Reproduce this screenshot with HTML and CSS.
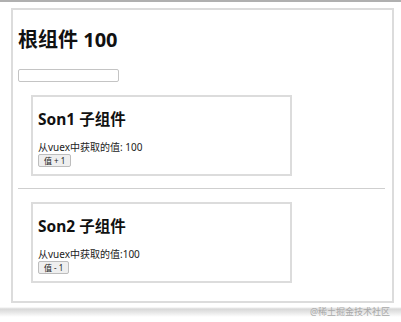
FILE: index.html
```html
<!DOCTYPE html>
<html>
<head>
<meta charset="utf-8">
<link rel="stylesheet" href="styles.css">
</head>
<body>
<div class="topline"></div>
<div class="stage">
  <div class="app">
    <h1 class="title">根组件 100</h1>
    <input class="field" type="text">
    <div class="son">
      <h2 class="son-title">Son1 子组件</h2>
      <p class="son-text">从vuex中获取的值: 100</p>
      <button class="btn">值 + 1</button>
    </div>
    <hr class="divider">
    <div class="son">
      <h2 class="son-title">Son2 子组件</h2>
      <p class="son-text">从vuex中获取的值:100</p>
      <button class="btn">值 - 1</button>
    </div>
  </div>
  <div class="footer">
    <span class="mark">@稀土掘金技术社区</span>
  </div>
</div>
</body>
</html>
```
FILE: styles.css
```css
html, body {
  margin: 0;
  padding: 0;
  background: #fff;
  width: 401px;
  height: 322px;
  overflow: hidden;
  font-family: "Noto Sans", "Noto Sans CJK SC", sans-serif;
  color: #111;
}
.topline {
  height: 2px;
  background: #b0b0b0;
}
.stage {
  padding: 6px 0 0 11px;
}
.app {
  box-sizing: border-box;
  width: 383px;
  height: 295px;
  border: 2px solid #dcdcdc;
  padding: 0 7px 0 5px;
}
.title {
  margin: 15px 0 0 0;
  font-size: 20px;
  line-height: 30px;
  font-weight: 700;
}
.field {
  display: block;
  box-sizing: border-box;
  margin: 14px 0 0 0;
  width: 101px;
  height: 13px;
  border: 1px solid #c4c4c4;
  border-radius: 2px;
  padding: 0;
}
.son {
  box-sizing: border-box;
  margin: 13px 0 0 13px;
  width: 261px;
  height: 81px;
  border: 2px solid #dcdcdc;
  padding: 0 5px;
}
.son-title {
  margin: 10px 0 0 0;
  font-size: 15.5px;
  line-height: 24px;
  font-weight: 700;
}
.son-text {
  margin: 10px 0 0 0;
  font-size: 10px;
  line-height: 12px;
  color: #222;
}
.btn {
  display: block;
  box-sizing: border-box;
  margin: 1px 0 0 0;
  height: 13px;
  padding: 0 5px;
  font-family: "Noto Sans", "Noto Sans CJK SC", sans-serif;
  font-size: 8px;
  line-height: 11px;
  background: #efefef;
  border: 1px solid #bdbdbd;
  border-radius: 2px;
  color: #222;
}
.divider {
  margin: 12px 0 0 0;
  border: 0;
  border-top: 1px solid #cfcfcf;
  height: 0;
}
.son + .divider + .son {
  margin-top: 13px;
}
.footer {
  position: relative;
  margin-left: -11px;
  height: 20px;
  background: linear-gradient(#fff 0, #fff 4px, #d8d8d8 6px, #eaeaea 10px, #fff 14px);
}
.mark {
  position: absolute;
  right: 11px;
  top: 3px;
  font-size: 9px;
  line-height: 11px;
  color: #a8a8a8;
}
```
